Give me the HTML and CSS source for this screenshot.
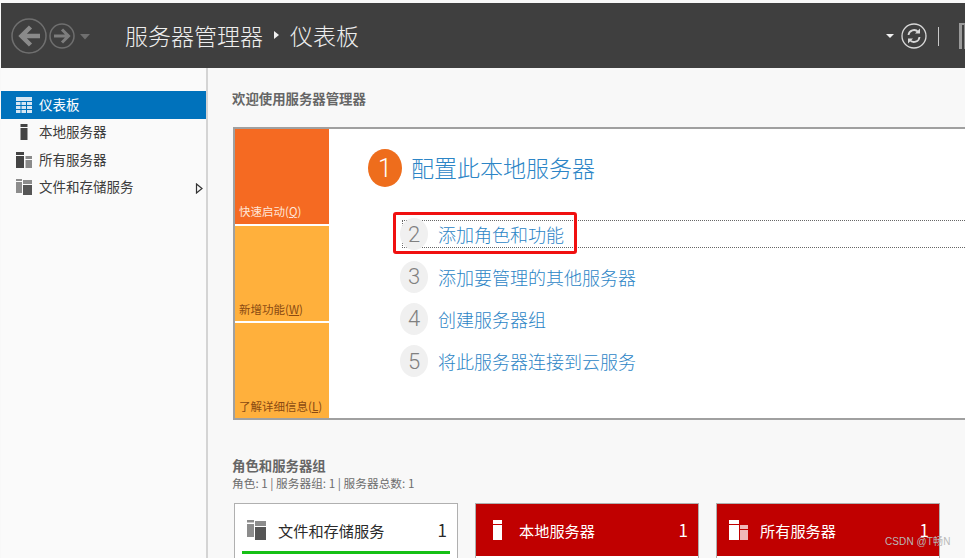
FILE: index.html
```html
<!DOCTYPE html>
<html lang="zh-CN">
<head>
  <meta charset="UTF-8">
  <meta name="viewport" content="width=device-width, initial-scale=1.0">
  <title>服务器管理器</title>
  <link rel="stylesheet" href="styles.css">
</head>
<body>
  <header class="topbar">
    <svg class="nav-icon" width="92" height="42" viewBox="0 0 92 42">
      <circle cx="18" cy="21" r="17" fill="none" stroke="#6f6f6f" stroke-width="1.5"/>
      <path d="M29 21H11M19.500 12l-9 9 9 9" fill="none" stroke="#8a8a8a" stroke-width="4.500"/>
      <circle cx="51" cy="21" r="12" fill="none" stroke="#6f6f6f" stroke-width="1.5"/>
      <path d="M43 21h14M51 14.500l6.500 6.500-6.500 6.500" fill="none" stroke="#7d7d7d" stroke-width="3"/>
      <path d="M69 19h10l-5 5.500z" fill="#6f6f6f"/>
    </svg>
    <div class="crumb">服务器管理器<span class="crumb-arrow"></span>仪表板</div>
    <div class="tools">
      <span class="caret"></span>
      <svg class="refresh" width="26" height="26" viewBox="0 0 26 26">
        <circle cx="13" cy="13" r="12" fill="none" stroke="#d8d8d8" stroke-width="1.300"/>
        <path d="M7.500 12a5.500 5.500 0 0 1 9.700-3M18.500 14a5.500 5.500 0 0 1-9.700 3" fill="none" stroke="#d8d8d8" stroke-width="1.800"/>
        <path d="M19 5.500v5h-5zM7 20.500v-5h5z" fill="#d8d8d8"/>
      </svg>
      <span class="divider"></span>
      <span class="cutoff"></span>
    </div>
  </header>

  <div class="layout">
    <nav class="sidebar">
      <a class="side-item active">
        <svg class="side-icon" width="16" height="16" viewBox="0 0 16 16">
          <path d="M0 0h16v4H0zM0 5h4.500v3H0zM5.500 5h4.500v3H5.500zM11 5h5v3h-5zM0 9h4.500v3H0zM5.500 9h4.500v3H5.500zM11 9h5v3h-5zM0 13h4.500v3H0zM5.500 13h4.500v3H5.500zM11 13h5v3h-5z" fill="#d5e6f3"/>
        </svg>
        仪表板
      </a>
      <a class="side-item">
        <svg class="side-icon" width="16" height="16" viewBox="0 0 16 16">
          <path d="M4.500 0h7v3h-7zM4.500 4h7v12h-7z" fill="#444"/>
        </svg>
        本地服务器
      </a>
      <a class="side-item">
        <svg class="side-icon" width="16" height="16" viewBox="0 0 16 16">
          <path d="M0 0h8v3H0zM0 4h8v12H0z" fill="#444"/>
          <path d="M9.500 4h6.500v3H9.500zM9.500 8h6.500v8H9.500z" fill="#8a8a8a"/>
        </svg>
        所有服务器
      </a>
      <a class="side-item">
        <svg class="side-icon" width="16" height="16" viewBox="0 0 16 16">
          <path d="M0 0h6v2H0zM7 1h9v4H7zM0 3h6v11H0z" fill="#8c8c8c"/>
          <path d="M7 6h9v10H7z" fill="#555"/>
        </svg>
        文件和存储服务
        <svg class="side-arrow" width="8" height="11" viewBox="0 0 8 11">
          <path d="M1.500 1l5.500 4.500-5.500 4.500z" fill="#fafafa" stroke="#333" stroke-width="1.200"/>
        </svg>
      </a>
    </nav>

    <main class="content">
      <h2 class="welcome">欢迎使用服务器管理器</h2>

      <section class="panel">
        <div class="tiles">
          <div class="tile tile-start">快速启动(<u>Q</u>)</div>
          <div class="tile tile-new">新增功能(<u>W</u>)</div>
          <div class="tile tile-learn">了解详细信息(<u>L</u>)</div>
        </div>
        <div class="steps">
          <div class="step-main">
            <span class="step-num">1</span>
            <span class="step-title">配置此本地服务器</span>
          </div>
          <ul class="step-list">
            <li class="step focused"><span class="circle">2</span>添加角色和功能<span class="highlight"></span></li>
            <li class="step"><span class="circle">3</span>添加要管理的其他服务器</li>
            <li class="step"><span class="circle">4</span>创建服务器组</li>
            <li class="step"><span class="circle">5</span>将此服务器连接到云服务</li>
          </ul>
        </div>
      </section>

      <h3 class="group-title">角色和服务器组</h3>
      <p class="group-sub">角色: 1 | 服务器组: 1 | 服务器总数: 1</p>

      <div class="cards">
        <div class="card card-ok">
          <div class="card-head">
            <svg class="card-icon" width="20" height="20" viewBox="0 0 20 20">
              <path d="M0 0h7v2.500H0zM8 1h11v5H8zM0 4h7v13H0z" fill="#8c8c8c"/>
              <path d="M8 7h11v13H8z" fill="#555"/>
            </svg>
            <span class="card-name">文件和存储服务</span>
            <span class="card-count">1</span>
          </div>
          <div class="card-bar"></div>
        </div>
        <div class="card card-bad">
          <div class="card-head">
            <svg class="card-icon" width="20" height="20" viewBox="0 0 20 20">
              <path d="M5 0h9v4H5zM5 5h9v15H5z" fill="#fff"/>
            </svg>
            <span class="card-name">本地服务器</span>
            <span class="card-count">1</span>
          </div>
        </div>
        <div class="card card-bad">
          <div class="card-head">
            <svg class="card-icon" width="20" height="20" viewBox="0 0 20 20">
              <path d="M0 0h10v4H0zM0 5h10v15H0z" fill="#fff"/>
              <path d="M11 5h8v4h-8zM11 10h8v10h-8z" fill="#f0b8b8"/>
            </svg>
            <span class="card-name">所有服务器</span>
            <span class="card-count">1</span>
          </div>
        </div>
      </div>
    </main>
  </div>

  <span class="watermark">CSDN @T畅N</span>
</body>
</html>
```

FILE: styles.css
```css
html, body {
  height: 558px;
  overflow: hidden;
}

body {
  margin: 0;
  padding-top: 3px;
  box-sizing: border-box;
  background-color: #f8f8f8;
  font-family: "Noto Sans CJK SC", "Noto Sans", sans-serif;
  display: flex;
  flex-direction: column;
  position: relative;
}

.topbar {
  height: 65px;
  box-sizing: border-box;
  padding-top: 1px;
  flex-shrink: 0;
  margin-left: 1px;
  background: #3f3f3f;
  display: flex;
  align-items: center;
  color: #f0f0f0;
}

.nav-icon {
  margin-left: 10px;
  flex-shrink: 0;
}

.crumb {
  margin: -2px 0 0 22px;
  font-size: 23px;
  font-weight: 300;
  color: #eeeeee;
  display: flex;
  align-items: center;
}

.crumb-arrow {
  width: 0;
  height: 0;
  margin: 0 11px;
  border-left: 5px solid #f0f0f0;
  border-top: 4px solid transparent;
  border-bottom: 4px solid transparent;
}

.tools {
  margin-left: auto;
  display: flex;
  align-items: center;
}

.caret {
  width: 0;
  height: 0;
  margin-right: 7px;
  border-top: 4px solid #f0f0f0;
  border-left: 4px solid transparent;
  border-right: 4px solid transparent;
}

.refresh {
  margin-right: 11px;
}

.divider {
  width: 1px;
  height: 19px;
  margin-right: 20px;
  background: #c8c8c8;
}

.cutoff {
  width: 6px;
  height: 26px;
  border-left: 3px solid #9a9a9a;
  border-right: 1px solid #8a8a8a;
  border-top: 2px solid #9a9a9a;
  box-sizing: border-box;
}

.layout {
  flex: 1;
  display: flex;
  min-height: 0;
}

.sidebar {
  width: 205px;
  margin-left: 1px;
  padding-top: 23px;
  flex-shrink: 0;
  background: #fafafa;
  border-right: 2px solid #d4d4d4;
}

.side-item {
  height: 27.5px;
  box-sizing: border-box;
  padding: 0 0 2px 15px;
  display: flex;
  align-items: center;
  font-size: 13.500px;
  color: #3c3c3c;
  position: relative;
}

.side-item.active {
  background: #0072bc;
  color: #ffffff;
}

.side-icon {
  margin: 2px 7px 0 0;
  flex-shrink: 0;
}

.side-arrow {
  position: absolute;
  right: 3px;
  top: 9px;
}

.content {
  flex: 1;
  min-width: 0;
  padding: 22px 0 0 24px;
  margin-left: 1px;
}

.welcome {
  margin: 0 0 20px -1px;
  font-size: 13.400px;
  line-height: 17px;
  font-weight: 700;
  color: #666666;
}

.panel {
  height: 293px;
  box-sizing: border-box;
  background: #ffffff;
  border: 2px solid #a0a0a0;
  border-right: 0;
  display: flex;
}

.tiles {
  width: 94px;
  flex-shrink: 0;
  display: flex;
  flex-direction: column;
  gap: 2px;
}

.tile {
  height: 95px;
  box-sizing: border-box;
  padding: 0 0 3px 4px;
  display: flex;
  align-items: flex-end;
  font-size: 11.500px;
  line-height: 17px;
  white-space: nowrap;
}

.tile-start {
  padding-bottom: 4px;
  background: #f56a22;
  color: #ffe6d8;
}

.tile-new,
.tile-learn {
  background: #ffb03c;
  color: #8a4a12;
}

.steps {
  flex: 1;
  min-width: 0;
}

.step-main {
  margin: 20px 0 0 39px;
  display: flex;
  align-items: center;
}

.step-num {
  width: 34px;
  height: 38px;
  margin-right: 9px;
  border-radius: 50%;
  background: #ee6d1c;
  color: #ffffff;
  font-family: "Roboto", sans-serif;
  font-size: 25px;
  font-weight: 300;
  display: flex;
  align-items: center;
  justify-content: center;
}

.step-title {
  padding-bottom: 2px;
  font-size: 23px;
  line-height: 36px;
  font-weight: 300;
  color: #2c85c6;
}

.step-list {
  list-style: none;
  margin: 33px 0 0;
  padding: 0;
}

.step {
  height: 32px;
  margin-bottom: 10.300px;
  padding-left: 71px;
  display: flex;
  align-items: center;
  font-size: 18px;
  font-weight: 300;
  color: #2c85c6;
  position: relative;
}

.step.focused {
  height: 26px;
  margin: 0 0 12.500px 73px;
  padding-left: 0;
  border: 1px dotted #666666;
  border-right: 0;
}

.step.focused .circle {
  margin-left: -3px;
}

.circle {
  width: 28px;
  height: 32px;
  margin-right: 10px;
  border-radius: 50%;
  background: #f0f0f0;
  color: #808080;
  font-family: "Roboto", sans-serif;
  font-size: 22px;
  font-weight: 300;
  display: flex;
  align-items: center;
  justify-content: center;
  flex-shrink: 0;
}

.highlight {
  position: absolute;
  left: -10px;
  top: -9px;
  width: 178px;
  height: 36px;
  border: 3px solid #f01010;
  border-radius: 3px;
}

.group-title {
  margin: 37px 0 0 -1px;
  font-size: 13.400px;
  line-height: 17px;
  font-weight: 700;
  color: #666666;
}

.group-sub {
  margin: 1px 0 0 -1px;
  font-size: 11.700px;
  line-height: 16px;
  color: #6d6d6d;
}

.cards {
  margin: 12px 0 0 1px;
  display: flex;
  gap: 17px;
}

.card {
  width: 224px;
  height: 60px;
  box-sizing: border-box;
  flex-shrink: 0;
  background: #ffffff;
  border: 1px solid #b0b0b0;
}

.card-head {
  height: 52px;
  padding: 0 12px 1px;
  box-sizing: border-box;
  display: flex;
  align-items: center;
}

.card-bad .card-head {
  background: #c00000;
  color: #ffffff;
}

.card-ok .card-head {
  color: #2a2a2a;
}

.card-icon {
  margin-right: 11px;
  flex-shrink: 0;
}

.card-name {
  font-size: 15.200px;
}

.card-count {
  margin-left: auto;
  margin-right: -2px;
  font-size: 17px;
}

.card-bar {
  height: 3px;
  margin: -5px 7px 0;
  background: #16c016;
}

.watermark {
  position: absolute;
  left: 885px;
  top: 535px;
  font-family: "Liberation Sans", "Noto Sans CJK SC", sans-serif;
  font-size: 10px;
  line-height: 14px;
  letter-spacing: 0.100px;
  color: #b8b8b8;
  white-space: nowrap;
}
```
